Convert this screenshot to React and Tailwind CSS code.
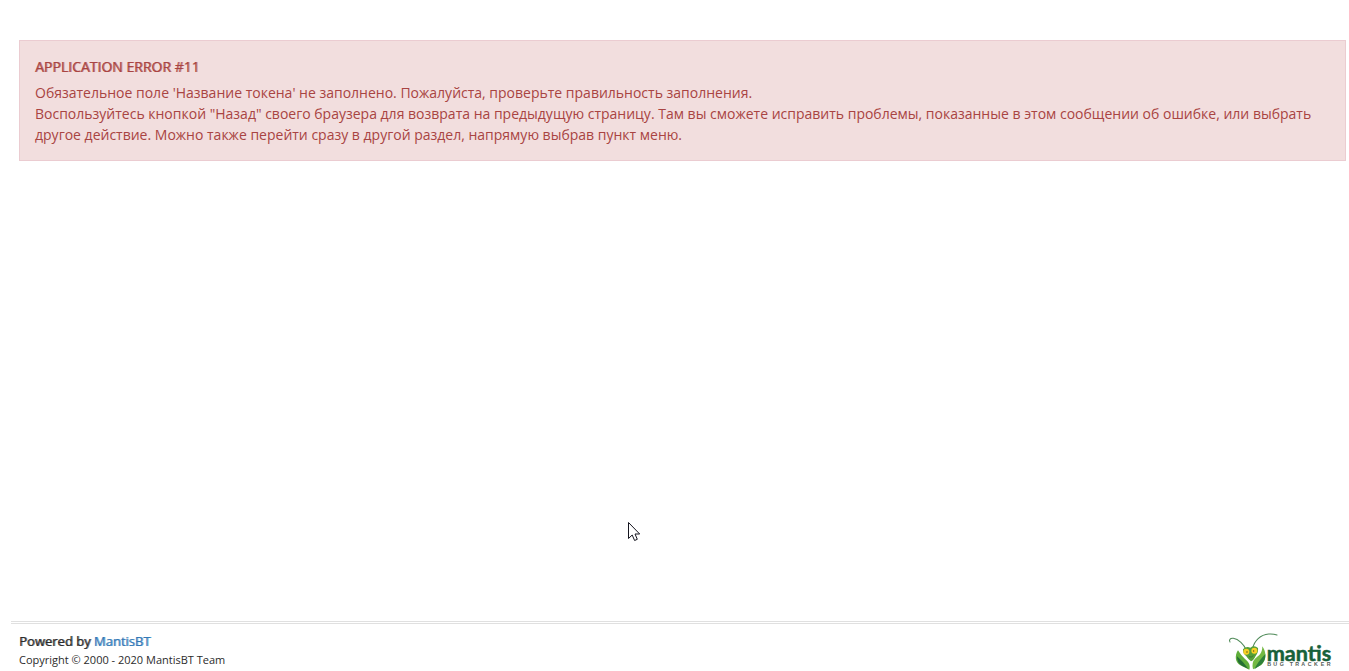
function MantisLogo() {
  return (
    <svg viewBox="24 66 312 114" className="h-[38px] w-[104px]" role="img" aria-label="Mantis Bug Tracker">
      <g fill="none" stroke="#4f8a58" strokeWidth="3.2" strokeLinecap="round">
        <path d="M78 119C72 104 56 87 40 85C30 84 26 90 30 96" />
        <path d="M98 116C102 92 122 74 146 72Q160 71 171 75" />
      </g>
      <path d="M54 121C43 137 46 158 61 166L88 179C93 162 82 153 75 147Q65 139 54 121Z" fill="#5fae3a" />
      <path d="M51 139Q50 160 67 168L85 176Q72 158 51 139Z" fill="#256f35" />
      <path d="M127 109C127 130 117 137 105 146Q94 157 99 178L124 165C141 149 139 126 127 109Z" fill="#74b943" />
      <path d="M136 132Q138 153 121 166L103 178Q112 157 136 132Z" fill="#2d8039" />
      <path d="M69 118Q78 108 91 113Q103 104 114 114Q116 127 107 138Q100 152 93 154Q86 150 79 139Q68 131 69 118Z" fill="#55a037" />
      <ellipse cx="79" cy="125" rx="9" ry="9" fill="#f7cf24" />
      <ellipse cx="103" cy="122" rx="9" ry="9" fill="#f7cf24" />
      <circle cx="81" cy="126" r="2.2" fill="#54581d" />
      <circle cx="101" cy="123" r="2.2" fill="#54581d" />
      <path d="M87 140Q94 144 100 137" fill="none" stroke="#24642d" strokeWidth="2" />
      <text x="140" y="152" fontSize="65" fontWeight="700" fontFamily="'Lato', sans-serif" fill="#17613a" stroke="#17613a" strokeWidth="1.5">mantis</text>
      <text y="169" fontSize="16" fontWeight="700" fontFamily="'Liberation Sans', sans-serif" fill="#555b57">
        <tspan x="142">B</tspan><tspan x="160">U</tspan><tspan x="179">G</tspan>
        <tspan x="209">T</tspan><tspan x="226">R</tspan><tspan x="244">A</tspan><tspan x="263">C</tspan><tspan x="282">K</tspan><tspan x="302">E</tspan><tspan x="320">R</tspan>
      </text>
    </svg>
  );
}

function Pointer() {
  return (
    <svg viewBox="0 0 13 20" className="pointer-events-none absolute left-[628px] top-[522px] h-5 w-[13px]" aria-hidden="true">
      <path d="M.5.5V16.5L4.2 13L6.6 18.5L9.3 17.3L7 12H11.7Z" fill="#fff" stroke="#15151f" />
    </svg>
  );
}

export default function App() {
  return (
    <div className="relative flex min-h-screen flex-col bg-white font-['Open_Sans','Noto_Sans',sans-serif] text-[#2b2b2b]">
      <main className="flex-1 pt-10 pr-[3px] pl-[19px]">
        <div role="alert" className="border border-[#ebccd1] bg-[#f2dede] p-[15px] text-sm leading-[21px] text-[#a94442]">
          <p className="mb-[5px] [text-shadow:1px_0_0_#a94442b0]">APPLICATION ERROR #11</p>
          <p>Обязательное поле 'Название токена' не заполнено. Пожалуйста, проверьте правильность заполнения.</p>
          <p>
            Воспользуйтесь кнопкой "Назад" своего браузера для возврата на предыдущую страницу. Там вы сможете исправить
            проблемы, показанные в этом сообщении об ошибке, или выбрать другое действие. Можно также перейти сразу в
            другой раздел, напрямую выбрав пункт меню.
          </p>
        </div>
      </main>
      <footer className="ml-[11px] flex items-end justify-between border-t-[3px] border-double border-[#e0e0e0] pt-[7px] pr-[17px] pb-px pl-2">
        <div className="pb-px">
          <p className="text-[13px] leading-5 [text-shadow:1px_0_0_#2b2b2bb0]">
            Powered by <a href="https://www.mantisbt.org" className="text-[#337ab7] [text-shadow:1px_0_0_#337ab7b0]">MantisBT</a>
          </p>
          <small className="block text-[11px] leading-[18px]">Copyright © 2000 - 2020 MantisBT Team</small>
        </div>
        <a href="https://www.mantisbt.org"><MantisLogo /></a>
      </footer>
      <Pointer />
    </div>
  );
}
